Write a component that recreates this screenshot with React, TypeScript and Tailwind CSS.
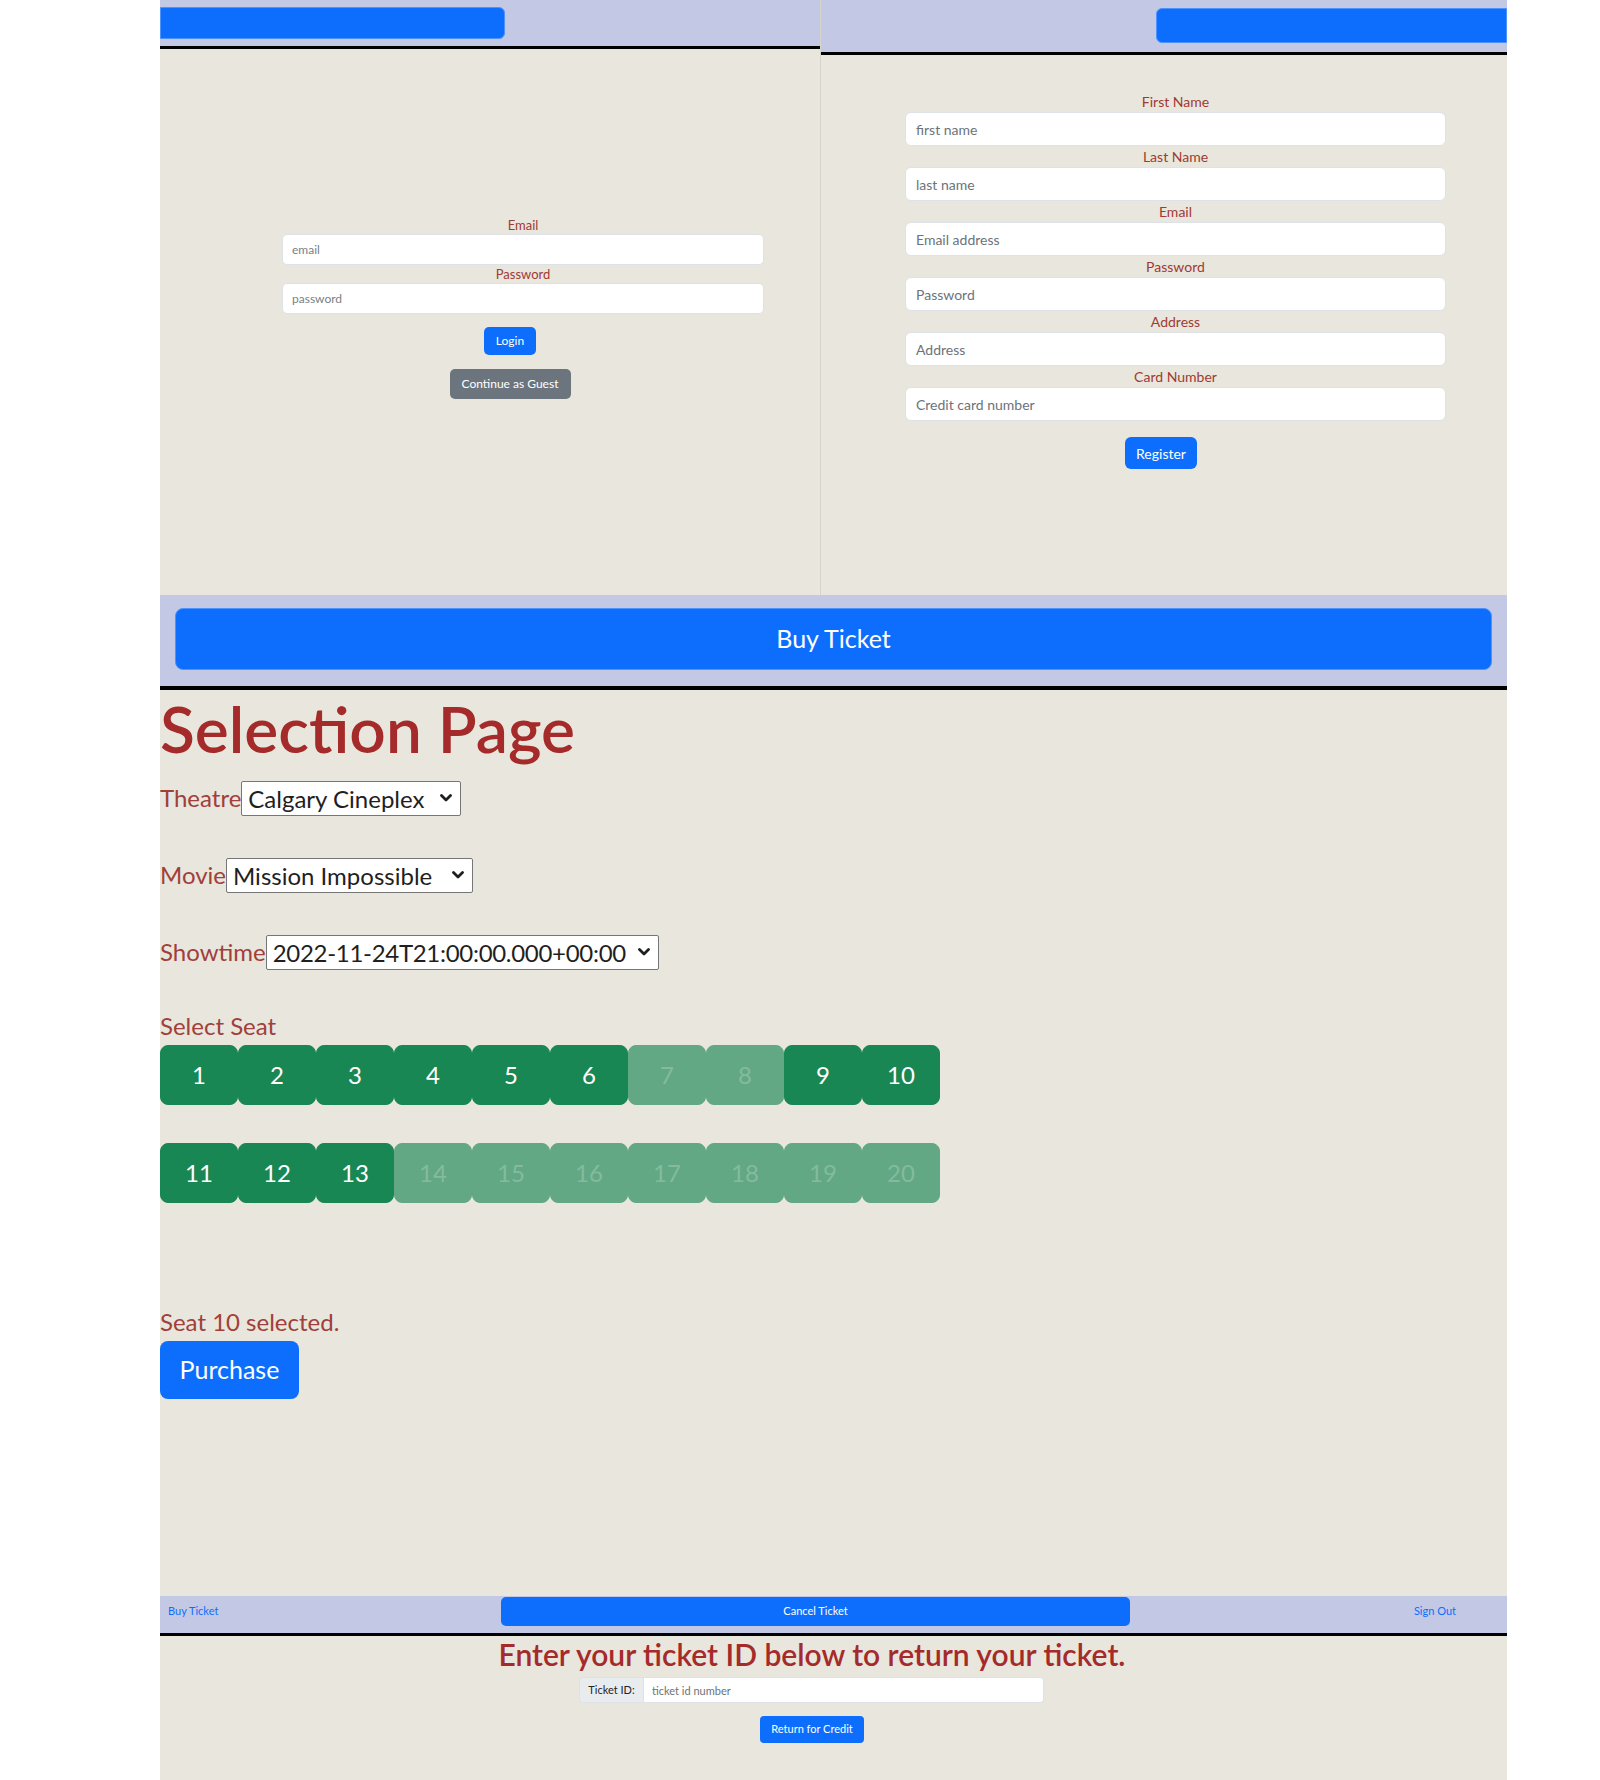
import React from "react";

function Chevron() {
  return (
    <svg
      className="pointer-events-none absolute right-[9px] top-1/2 -translate-y-1/2"
      width="12"
      height="8"
      viewBox="0 0 12 8"
      fill="none"
    >
      <path d="M1.5 1.6 L6 6 L10.5 1.6" stroke="#1f1f1f" strokeWidth="2.8" strokeLinecap="round" strokeLinejoin="round" />
    </svg>
  );
}

function Sel({ value, w, tight }: { value: string; w: string; tight?: boolean }) {
  return (
    <div className={`relative h-[35px] ${w}`}>
      <select
        defaultValue={value}
        className={`h-full w-full appearance-none rounded-[2px] border border-[#767676] bg-white pl-[6px] pr-[24px] text-[24px] leading-[33px] text-[#1f1f1f] ${
          tight ? "tracking-[-0.3px]" : ""
        }`}
      >
        <option>{value}</option>
      </select>
      <Chevron />
    </div>
  );
}

function Seat({ n, disabled }: { n: number; disabled?: boolean }) {
  return (
    <button
      className={`flex h-[60px] w-[78px] items-center justify-center rounded-[8px] border text-[24px] ${
        disabled
          ? "border-[#62a885] bg-[#62a885] text-[#84bba0]"
          : "border-[#198754] bg-[#198754] text-white"
      }`}
    >
      {n}
    </button>
  );
}

export default function App() {
  const row1 = [1, 2, 3, 4, 5, 6, 7, 8, 9, 10];
  const row2 = [11, 12, 13, 14, 15, 16, 17, 18, 19, 20];
  const dis = new Set([7, 8, 14, 15, 16, 17, 18, 19, 20]);
  const leftLabel = "text-center text-[13px] leading-[18px] text-[#a03a33]";
  const leftInput =
    "block h-[31px] w-full rounded-[5px] border border-[#dee2e6] bg-white px-[9px] text-[12px] text-[#333] placeholder:text-[#7a7f85] outline-none";
  const rLabel = "text-center text-[14px] leading-[21px] text-[#a03a33]";
  const rInput =
    "block h-[34px] w-full rounded-[6px] border border-[#dee2e6] bg-white px-[10px] text-[14px] text-[#333] placeholder:text-[#6c737a] outline-none";

  return (
    <div className="min-h-[1780px] w-full bg-white font-['Lato',sans-serif]">
      <div className="ml-[160px] min-h-[1780px] w-[1347px] bg-[#e8e6dd]">
        {/* Top: login + register */}
        <div className="flex h-[595px]">
          <div className="flex w-[661px] flex-col border-r border-[#d6d4cb]">
            <div className="h-[49px] border-b-[3px] border-black bg-[#c3c9e4] pt-[7px]">
              <div className="h-[32px] w-[345px] rounded-r-[6px] border border-[#4d93ff] bg-[#0d6efd]" />
            </div>
            <div className="pl-[122px] pt-[167px]">
              <div className="w-[482px]">
                <div className={leftLabel}>Email</div>
                <input className={leftInput} placeholder="email" />
                <div className={leftLabel}>Password</div>
                <input className={leftInput} placeholder="password" type="password" />
              </div>
              <div className="flex w-[456px] flex-col items-center">
                <button className="mt-[13px] h-[28px] w-[52px] rounded-[5px] bg-[#0d6efd] text-[12px] text-white">
                  Login
                </button>
                <button className="mt-[14px] h-[30px] w-[121px] rounded-[5px] bg-[#6c757d] text-[12px] text-white">
                  Continue as Guest
                </button>
              </div>
            </div>
          </div>
          <div className="flex w-[686px] flex-col">
            <div className="flex h-[55px] justify-end border-b-[3px] border-black bg-[#c3c9e4] pt-[8px]">
              <div className="h-[35px] w-[351px] rounded-l-[6px] border border-[#4d93ff] bg-[#0d6efd]" />
            </div>
            <div className="pl-[84px] pt-[36px]">
              <div className="w-[541px]">
                <div className={rLabel}>First Name</div>
                <input className={rInput} placeholder="first name" />
                <div className={rLabel}>Last Name</div>
                <input className={rInput} placeholder="last name" />
                <div className={rLabel}>Email</div>
                <input className={rInput} placeholder="Email address" />
                <div className={rLabel}>Password</div>
                <input className={rInput} placeholder="Password" type="password" />
                <div className={rLabel}>Address</div>
                <input className={rInput} placeholder="Address" />
                <div className={rLabel}>Card Number</div>
                <input className={rInput} placeholder="Credit card number" />
              </div>
              <div className="flex w-[512px] justify-center">
                <button className="mt-[16px] h-[32px] w-[72px] rounded-[6px] bg-[#0d6efd] text-[14px] text-white">
                  Register
                </button>
              </div>
            </div>
          </div>
        </div>

        {/* Buy Ticket bar */}
        <div className="h-[95px] border-b-[4px] border-black bg-[#c3c9e4] px-[15px] pt-[13px]">
          <button className="h-[62px] w-full rounded-[8px] border border-[#4d93ff] bg-[#0d6efd] text-[25px] text-white">
            Buy Ticket
          </button>
        </div>

        {/* Selection page */}
        <div className="h-[906px]">
          <h1 className="text-[64px] font-semibold leading-[77px] text-[#a52a2a]">Selection Page</h1>
          <div className="mt-[13px] flex items-center text-[24px] text-[#a0403a]">
            <span>Theatre</span>
            <Sel value="Calgary Cineplex" w="w-[220px]" />
          </div>
          <div className="mt-[41px] flex items-center text-[24px] text-[#a0403a]">
            <span>Movie</span>
            <Sel value="Mission Impossible" w="w-[247px]" />
          </div>
          <div className="mt-[41px] flex items-center text-[24px] text-[#a0403a]">
            <span>Showtime</span>
            <Sel value="2022-11-24T21:00:00.000+00:00" w="w-[393px]" tight />
          </div>
          <div className="mt-[41px] text-[24px] leading-[29px] text-[#a0403a]">Select Seat</div>
          <div className="mt-[5px] flex">
            {row1.map((n) => (
              <Seat key={n} n={n} disabled={dis.has(n)} />
            ))}
          </div>
          <div className="mt-[38px] flex">
            {row2.map((n) => (
              <Seat key={n} n={n} disabled={dis.has(n)} />
            ))}
          </div>
          <div className="mt-[104px] text-[24px] leading-[30px] text-[#a0403a]">Seat 10 selected.</div>
          <button className="mt-[4px] h-[58px] w-[139px] rounded-[8px] bg-[#0d6efd] text-[25px] text-white">
            Purchase
          </button>
        </div>

        {/* Bottom nav */}
        <div className="flex h-[40px] items-start border-b-[3px] border-black bg-[#c3c9e4] pt-[1px]">
          <div className="flex h-[29px] w-[341px] items-center pl-[8px] text-[11px] text-[#0d6efd]">Buy Ticket</div>
          <button className="h-[29px] w-[629px] rounded-[5px] bg-[#0d6efd] text-[11px] text-white">Cancel Ticket</button>
          <div className="flex h-[29px] flex-1 items-center justify-end pr-[51px] text-[11px] text-[#0d6efd]">Sign Out</div>
        </div>

        {/* Cancel ticket */}
        <div className="pt-[1px]">
          <div className="w-[1304px] text-center text-[30px] font-semibold leading-[35px] text-[#a52a2a]">
            Enter your ticket ID below to return your ticket.
          </div>
          <div className="ml-[419px] mt-[5px] flex h-[26px] w-[465px]">
            <div className="flex w-[65px] items-center justify-center rounded-l-[4px] border border-[#dee2e6] bg-[#e9ecef] text-[11px] text-[#212529]">
              Ticket ID:
            </div>
            <input
              className="h-full flex-1 rounded-r-[4px] border border-l-0 border-[#dee2e6] bg-white px-[8px] text-[11px] placeholder:text-[#6c737a] outline-none"
              placeholder="ticket id number"
            />
          </div>
          <button className="ml-[600px] mt-[13px] h-[27px] w-[104px] rounded-[4px] bg-[#0d6efd] text-[11px] text-white">
            Return for Credit
          </button>
        </div>
      </div>
    </div>
  );
}
